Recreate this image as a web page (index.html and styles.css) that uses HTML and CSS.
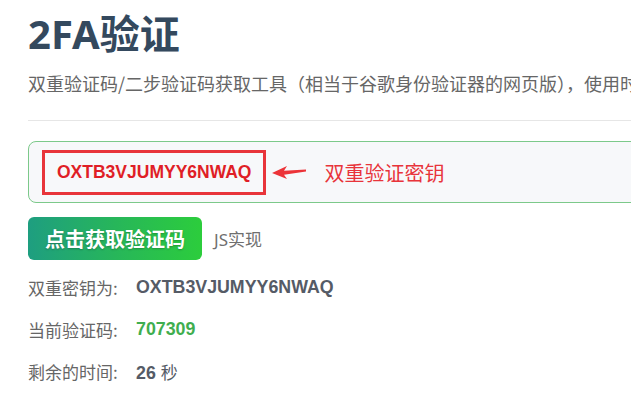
FILE: index.html
```html
<!DOCTYPE html>
<html lang="zh-CN">
<head>
<meta charset="utf-8">
<title>2FA验证</title>
<link rel="stylesheet" href="styles.css">
</head>
<body>
<div class="page">
  <h1 class="title">2FA验证</h1>
  <p class="desc">双重验证码/二步验证码获取工具（相当于谷歌身份验证器的网页版），使用时</p>
  <hr class="rule">
  <div class="form">
    <div class="secret-box">
      <span class="secret-mark"><span class="secret-code">OXTB3VJUMYY6NWAQ</span></span>
      <svg class="arrow" width="34" height="16" viewBox="0 0 34 16" aria-hidden="true">
        <polygon points="0,9 15,2 12,6.8 34,5.6 34,7.4 12,10.8 15,15" fill="#ec3338"/>
      </svg>
      <span class="note">双重验证密钥</span>
    </div>
    <div class="actions">
      <button class="btn" type="button">点击获取验证码</button>
      <span class="js">JS实现</span>
    </div>
    <div class="info">
      <div class="row"><span class="label">双重密钥为:</span><span class="value">OXTB3VJUMYY6NWAQ</span></div>
      <div class="row"><span class="label">当前验证码:</span><span class="value green">707309</span></div>
      <div class="row"><span class="label">剩余的时间:</span><span class="value">26 <span class="unit">秒</span></span></div>
    </div>
  </div>
</div>
</body>
</html>
```
FILE: styles.css
```css
html, body {
  margin: 0;
  padding: 0;
  background: #ffffff;
  overflow: hidden;
}
body {
  font-family: "Noto Sans", "Noto Sans CJK SC", sans-serif;
  color: #555;
}
.page {
  padding: 11px 0 0 28px;
  width: 760px;
}
.title {
  margin: 0;
  font-family: "Noto Sans", "Noto Sans CJK SC", sans-serif;
  font-size: 40px;
  line-height: 46px;
  font-weight: 700;
  color: #34495e;
}
.desc {
  margin: 13px 0 0 0;
  font-family: "Noto Sans CJK SC", sans-serif;
  font-size: 18px;
  line-height: 26px;
  color: #666;
  white-space: nowrap;
}
.rule {
  margin: 24px 0 0 0;
  border: 0;
  border-top: 1px solid #e6e6e6;
  height: 0;
}
.secret-box {
  margin-top: 20px;
  height: 60px;
  border: 1px solid #7cc98a;
  border-radius: 8px;
  background: #f7f8fa;
  display: flex;
  align-items: center;
  padding-left: 13px;
}
.secret-mark {
  display: flex;
  align-items: center;
  height: 39px;
  padding: 0 12px;
  border: 3px solid #e8343a;
}
.secret-code {
  font-family: "Liberation Sans", "Noto Sans", sans-serif;
  font-weight: 700;
  font-size: 17.5px;
  color: #e01e26;
}
.arrow {
  margin-left: 6px;
}
.note {
  margin-left: 18px;
  font-family: "Noto Sans CJK SC", sans-serif;
  font-size: 20px;
  color: #e8343a;
}
.actions {
  margin-top: 14px;
  display: flex;
  align-items: center;
}
.btn {
  width: 174px;
  height: 43px;
  border: 0;
  border-radius: 6px;
  background: linear-gradient(90deg, #1e9e80 0%, #27b65a 50%, #2ccd3c 100%);
  color: #fff;
  font-family: "Noto Sans CJK SC", sans-serif;
  font-size: 20px;
  font-weight: 700;
  padding: 0;
  text-shadow: 0 1px 2px rgba(0,0,0,0.25);
}
.js {
  margin-left: 12px;
  font-size: 17px;
  color: #6f6f6f;
}
.info {
  margin-top: 6px;
}
.row {
  display: flex;
  align-items: center;
  height: 42px;
}
.label {
  width: 108px;
  font-family: "Noto Sans CJK SC", sans-serif;
  font-size: 17px;
  color: #666;
}
.value {
  font-family: "Liberation Sans", "Noto Sans CJK SC", sans-serif;
  font-weight: 700;
  font-size: 17.8px;
  color: #555b66;
}
.value.green {
  color: #3fae4f;
}
.unit {
  font-family: "Noto Sans CJK SC", sans-serif;
  font-weight: 400;
  font-size: 17px;
}
```
